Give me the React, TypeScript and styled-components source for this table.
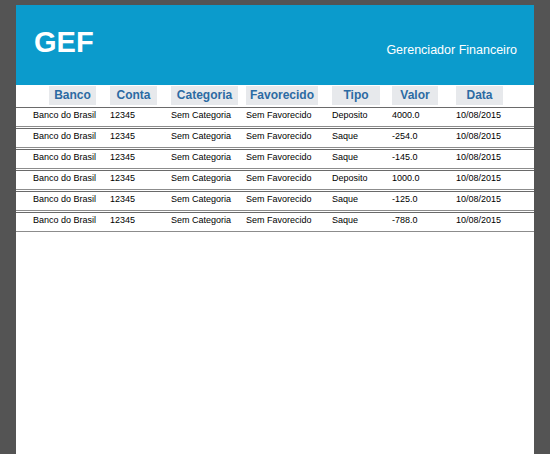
import React from "react";
import styled, { createGlobalStyle } from "styled-components";

const GlobalStyle = createGlobalStyle`
  html, body { margin: 0; padding: 0; background: #545454; }
  body { font-family: "Liberation Sans", Arial, sans-serif; }
`;

const Page = styled.div`
  margin: 5px 16px 0;
  width: 518px;
  min-height: calc(100vh - 5px);
  background: #ffffff;
  display: flex;
  flex-direction: column;
`;

const Header = styled.header`
  height: 80px;
  background: #0b9bcc;
  display: flex;
  justify-content: space-between;
  align-items: flex-start;
  padding: 0 17px 0 18px;
  box-sizing: border-box;
  color: #ffffff;
`;

const Title = styled.h1`
  margin: 23px 0 0;
  font-size: 29px;
  line-height: 29px;
  font-weight: bold;
`;

const Subtitle = styled.div`
  margin-top: 39px;
  font-size: 12.5px;
  line-height: 12.5px;
`;

const columns = "77px 61px 75px 86px 60px 64px 1fr";

const HeadRow = styled.div`
  display: grid;
  grid-template-columns: ${columns};
  padding: 1px 0 0 17px;
  height: 22px;
  box-sizing: border-box;
`;

const HeadCell = styled.div<{ $w: number; $offset?: number }>`
  width: ${(p) => p.$w}px;
  margin-left: ${(p) => p.$offset ?? 0}px;
  height: 19px;
  background: #e7e9ec;
  color: #2c6ba3;
  font-size: 12px;
  font-weight: bold;
  line-height: 19px;
  text-align: center;
`;

const Rows = styled.div`
  display: flex;
  flex-direction: column;
  gap: 1px;
`;

const Row = styled.div`
  display: grid;
  grid-template-columns: ${columns};
  padding: 2px 0 0 17px;
  height: 20px;
  box-sizing: border-box;
  border-top: 1px solid #6a6a6a;
  border-bottom: 1px solid #8c8c8c;
  font-size: 9px;
  line-height: 10px;
  color: #000000;
`;

const Cell = styled.div`
  white-space: nowrap;
`;

const heads: [string, number, number?][] = [
  ["Banco", 47, 16],
  ["Conta", 47],
  ["Categoria", 67],
  ["Favorecido", 72],
  ["Tipo", 48],
  ["Valor", 46],
  ["Data", 47],
];

const data = [
  ["Deposito", "4000.0"],
  ["Saque", "-254.0"],
  ["Saque", "-145.0"],
  ["Deposito", "1000.0"],
  ["Saque", "-125.0"],
  ["Saque", "-788.0"],
];

export default function App() {
  return (
    <>
      <GlobalStyle />
      <Page>
        <Header>
          <Title>GEF</Title>
          <Subtitle>Gerenciador Financeiro</Subtitle>
        </Header>
        <HeadRow>
          {heads.map(([t, w, o]) => (
            <HeadCell key={t} $w={w} $offset={o}>
              {t}
            </HeadCell>
          ))}
        </HeadRow>
        <Rows>
          {data.map(([tipo, valor], i) => (
            <Row key={i}>
              <Cell>Banco do Brasil</Cell>
              <Cell>12345</Cell>
              <Cell>Sem Categoria</Cell>
              <Cell>Sem Favorecido</Cell>
              <Cell>{tipo}</Cell>
              <Cell>{valor}</Cell>
              <Cell>10/08/2015</Cell>
            </Row>
          ))}
        </Rows>
      </Page>
    </>
  );
}
